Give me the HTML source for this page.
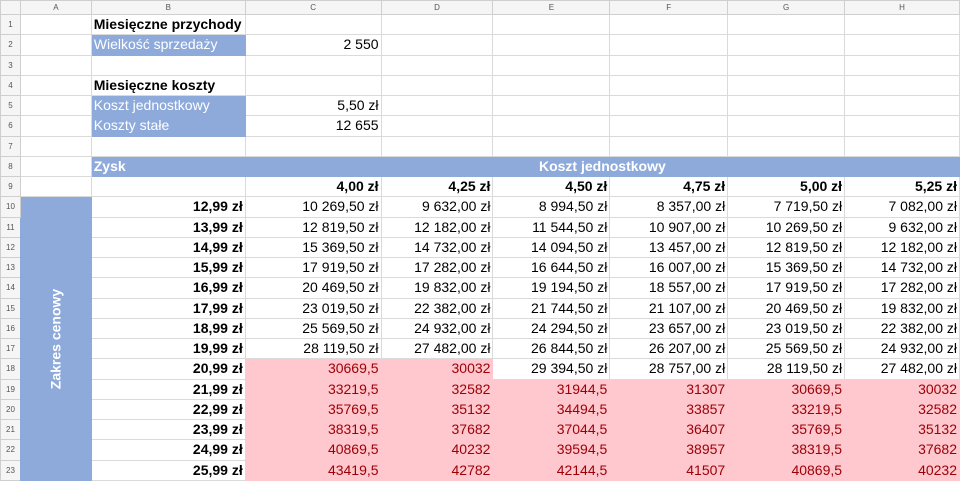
<!DOCTYPE html>
<html><head><meta charset="utf-8"><style>
body{margin:0;background:#fff;width:960px;height:482px;overflow:hidden}
table{border-collapse:collapse;table-layout:fixed;font-family:"Liberation Sans",Arial,sans-serif;font-size:14px;color:#000}
td{border:1px solid #dadada;height:19.26px;padding:0 2px;white-space:nowrap;overflow:hidden;text-align:right;line-height:19px}
tr.h td{height:13px;background:#f5f5f5;color:#555;font-size:8px;text-align:center;border-color:#cfcfcf;line-height:13px;font-weight:normal}
td.n{background:#f5f5f5;color:#555;font-size:8px;text-align:center;border-color:#cfcfcf;font-weight:normal}
.b{font-weight:bold}
.L{text-align:left}
.bl{background:#8eaadb;color:#fff;text-align:left;border-color:#8eaadb}
.p{background:#ffc7ce;color:#9c0006;border-color:#ffc7ce}
.hd{background:#8eaadb;color:#fff;font-weight:bold;border-color:#8eaadb}
</style></head><body>
<table>
<colgroup><col style="width:20px"><col style="width:71px"><col style="width:154px"><col style="width:136px"><col style="width:112px"><col style="width:117px"><col style="width:118px"><col style="width:117px"><col style="width:115px"></colgroup>
<tr class="h"><td></td><td>A</td><td>B</td><td>C</td><td>D</td><td>E</td><td>F</td><td>G</td><td>H</td></tr>
<tr><td class="n">1</td><td></td><td class="b L">Miesięczne przychody</td><td></td><td></td><td></td><td></td><td></td><td></td></tr>
<tr><td class="n">2</td><td></td><td class="bl">Wielkość sprzedaży</td><td>2 550</td><td></td><td></td><td></td><td></td><td></td></tr>
<tr><td class="n">3</td><td></td><td></td><td></td><td></td><td></td><td></td><td></td><td></td></tr>
<tr><td class="n">4</td><td></td><td class="b L">Miesięczne koszty</td><td></td><td></td><td></td><td></td><td></td><td></td></tr>
<tr><td class="n">5</td><td></td><td class="bl">Koszt jednostkowy</td><td>5,50 zł</td><td></td><td></td><td></td><td></td><td></td></tr>
<tr><td class="n">6</td><td></td><td class="bl">Koszty stałe</td><td>12 655</td><td></td><td></td><td></td><td></td><td></td></tr>
<tr><td class="n">7</td><td></td><td></td><td></td><td></td><td></td><td></td><td></td><td></td></tr>
<tr><td class="n">8</td><td></td><td class="hd L">Zysk</td><td class="hd" colspan="6" style="text-align:center">Koszt jednostkowy</td></tr>
<tr class="b"><td class="n">9</td><td></td><td></td><td>4,00 zł</td><td>4,25 zł</td><td>4,50 zł</td><td>4,75 zł</td><td>5,00 zł</td><td>5,25 zł</td></tr>
<tr><td class="n">10</td><td rowspan="14" class="hd" style="position:relative;padding:0"><div style="position:absolute;left:50%;top:50%;transform:translate(-50%,-50%) rotate(-90deg);white-space:nowrap">Zakres cenowy</div></td><td class="b">12,99 zł</td><td>10 269,50 zł</td><td>9 632,00 zł</td><td>8 994,50 zł</td><td>8 357,00 zł</td><td>7 719,50 zł</td><td>7 082,00 zł</td></tr>
<tr><td class="n">11</td><td class="b">13,99 zł</td><td>12 819,50 zł</td><td>12 182,00 zł</td><td>11 544,50 zł</td><td>10 907,00 zł</td><td>10 269,50 zł</td><td>9 632,00 zł</td></tr>
<tr><td class="n">12</td><td class="b">14,99 zł</td><td>15 369,50 zł</td><td>14 732,00 zł</td><td>14 094,50 zł</td><td>13 457,00 zł</td><td>12 819,50 zł</td><td>12 182,00 zł</td></tr>
<tr><td class="n">13</td><td class="b">15,99 zł</td><td>17 919,50 zł</td><td>17 282,00 zł</td><td>16 644,50 zł</td><td>16 007,00 zł</td><td>15 369,50 zł</td><td>14 732,00 zł</td></tr>
<tr><td class="n">14</td><td class="b">16,99 zł</td><td>20 469,50 zł</td><td>19 832,00 zł</td><td>19 194,50 zł</td><td>18 557,00 zł</td><td>17 919,50 zł</td><td>17 282,00 zł</td></tr>
<tr><td class="n">15</td><td class="b">17,99 zł</td><td>23 019,50 zł</td><td>22 382,00 zł</td><td>21 744,50 zł</td><td>21 107,00 zł</td><td>20 469,50 zł</td><td>19 832,00 zł</td></tr>
<tr><td class="n">16</td><td class="b">18,99 zł</td><td>25 569,50 zł</td><td>24 932,00 zł</td><td>24 294,50 zł</td><td>23 657,00 zł</td><td>23 019,50 zł</td><td>22 382,00 zł</td></tr>
<tr><td class="n">17</td><td class="b">19,99 zł</td><td>28 119,50 zł</td><td>27 482,00 zł</td><td>26 844,50 zł</td><td>26 207,00 zł</td><td>25 569,50 zł</td><td>24 932,00 zł</td></tr>
<tr><td class="n">18</td><td class="b">20,99 zł</td><td class="p">30669,5</td><td class="p">30032</td><td>29 394,50 zł</td><td>28 757,00 zł</td><td>28 119,50 zł</td><td>27 482,00 zł</td></tr>
<tr><td class="n">19</td><td class="b">21,99 zł</td><td class="p">33219,5</td><td class="p">32582</td><td class="p">31944,5</td><td class="p">31307</td><td class="p">30669,5</td><td class="p">30032</td></tr>
<tr><td class="n">20</td><td class="b">22,99 zł</td><td class="p">35769,5</td><td class="p">35132</td><td class="p">34494,5</td><td class="p">33857</td><td class="p">33219,5</td><td class="p">32582</td></tr>
<tr><td class="n">21</td><td class="b">23,99 zł</td><td class="p">38319,5</td><td class="p">37682</td><td class="p">37044,5</td><td class="p">36407</td><td class="p">35769,5</td><td class="p">35132</td></tr>
<tr><td class="n">22</td><td class="b">24,99 zł</td><td class="p">40869,5</td><td class="p">40232</td><td class="p">39594,5</td><td class="p">38957</td><td class="p">38319,5</td><td class="p">37682</td></tr>
<tr><td class="n">23</td><td class="b">25,99 zł</td><td class="p">43419,5</td><td class="p">42782</td><td class="p">42144,5</td><td class="p">41507</td><td class="p">40869,5</td><td class="p">40232</td></tr>
</table>
</body></html>
